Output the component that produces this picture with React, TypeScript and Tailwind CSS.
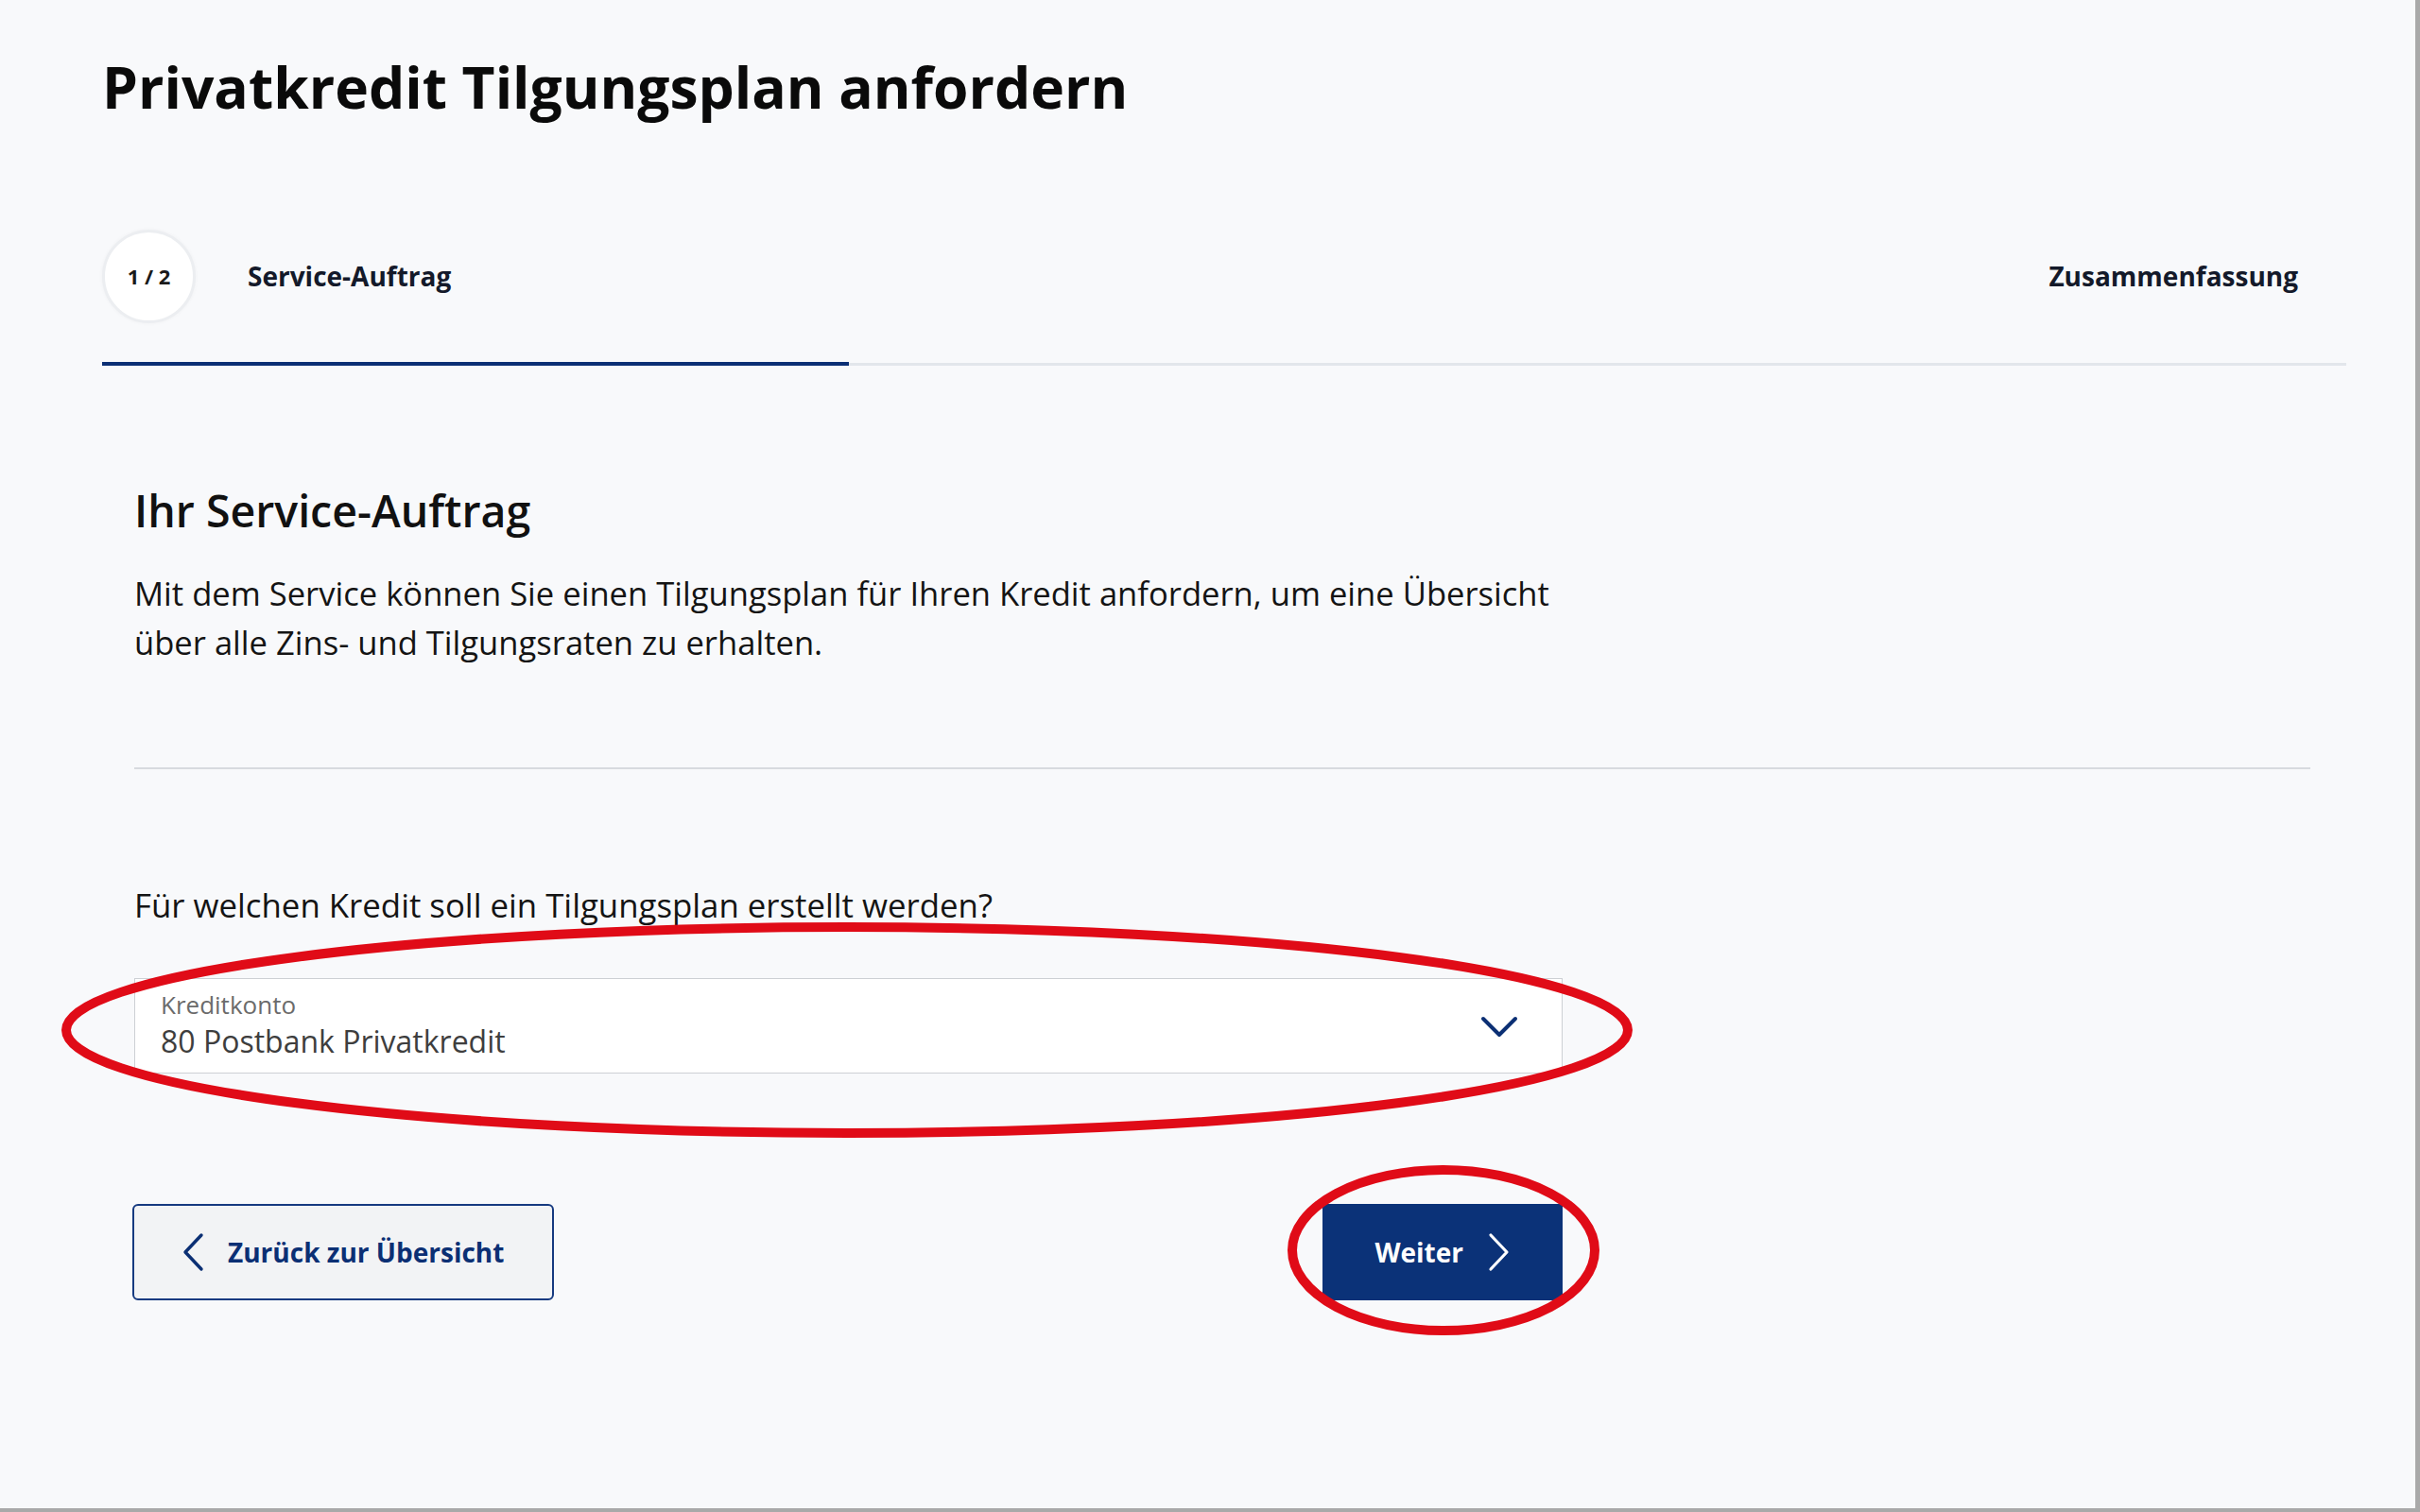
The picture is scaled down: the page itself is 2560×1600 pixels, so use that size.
import * as React from "react";

const ChevronLeft = ({ className }: { className?: string }) => (
  <svg viewBox="0 0 24 42" className={className} fill="none" stroke="currentColor" strokeWidth={3.4} strokeLinecap="round" strokeLinejoin="round">
    <path d="M21 3 L4 21 L21 39" />
  </svg>
);

const ChevronRight = ({ className }: { className?: string }) => (
  <svg viewBox="0 0 24 42" className={className} fill="none" stroke="currentColor" strokeWidth={3.2} strokeLinecap="round" strokeLinejoin="round">
    <path d="M3 3 L20 21 L3 39" />
  </svg>
);

const ChevronDown = ({ className }: { className?: string }) => (
  <svg viewBox="0 0 40 24" className={className} fill="none" stroke="currentColor" strokeWidth={4} strokeLinecap="round" strokeLinejoin="round">
    <path d="M3 3 L20 20 L37 3" />
  </svg>
);

const App = () => {
  return (
    <div className="relative w-[2560px] h-[1600px] overflow-hidden bg-[#f8f9fb] border-r-[5px] border-b-[4px] border-[#a9a9a9] font-['Open_Sans',sans-serif] text-[#111]">
      <div className="pl-[108px] pr-[73px] pt-[56px]">
        <h1 className="text-[60.5px] leading-[72px] font-bold text-[#0a0a0a]">
          Privatkredit Tilgungsplan anfordern
        </h1>

        {/* stepper */}
        <div className="mt-[115px] flex items-center justify-between pr-[51px]">
          <div className="flex items-center gap-[55px]">
            <div className="w-[99px] h-[99px] rounded-full bg-white border-[3px] border-[#eceef1] shadow-[0_0_4px_rgba(0,0,0,0.04)] flex items-center justify-center text-[22px] font-bold text-[#1a1a1a]">
              1 / 2
            </div>
            <span className="-mt-[2px] text-[28px] font-bold text-[#141a2a]">Service-Auftrag</span>
          </div>
          <span className="-mt-[2px] text-[28px] font-bold text-[#141a2a]">Zusammenfassung</span>
        </div>

        <div className="mt-[41px] flex items-center h-[4px]">
          <div className="w-[790px] h-[4px] bg-[#0b2f74]" />
          <div className="flex-1 h-[3px] bg-[#e2e6eb]" />
        </div>

        {/* content */}
        <div className="pl-[34px] pr-[38px]">
          <h2 className="mt-[125px] text-[46.5px] leading-[56px] font-semibold text-[#111]">
            Ihr Service-Auftrag
          </h2>
          <p className="mt-[34px] text-[34.6px] leading-[52px] text-[#141414]">
            Mit dem Service können Sie einen Tilgungsplan für Ihren Kredit anfordern, um eine Übersicht
            <br />
            über alle Zins- und Tilgungsraten zu erhalten.
          </p>

          <div className="mt-[106px] h-[2px] bg-[#d7dadf]" />

          <p className="mt-[120px] text-[34.8px] leading-[48px] text-[#141414]">
            Für welchen Kredit soll ein Tilgungsplan erstellt werden?
          </p>

          <div className="w-[1511px]">
            <div className="mt-[53px] h-[101px] bg-white border border-[#cdd0d4] pl-[27px] pr-[46px] pt-[11px] flex items-start justify-between">
              <div className="flex flex-col">
                <span className="text-[26px] leading-[32px] text-[#6b6b6b]">Kreditkonto</span>
                <span className="mt-[4px] text-[32px] leading-[38px] text-[#3e3e3e]">80 Postbank Privatkredit</span>
              </div>
              <ChevronDown className="mt-[28px] w-[40px] h-[24px] text-[#0b2f74]" />
            </div>

            <div className="mt-[138px] flex items-center justify-between">
              <button className="-ml-[2px] h-[102px] pl-[50px] pr-[51px] flex items-center gap-[25px] rounded-[6px] border-2 border-[#163a80] bg-[#f2f3f5] text-[#0b2f74] text-[28px] font-bold">
                <ChevronLeft className="w-[24px] h-[42px]" />
                Zurück zur Übersicht
              </button>
              <button className="h-[102px] pl-[55px] pr-[55px] flex items-center gap-[26px] bg-[#0b3278] text-white text-[28px] font-bold">
                Weiter
                <ChevronRight className="w-[24px] h-[42px]" />
              </button>
            </div>
          </div>
        </div>
      </div>

      {/* red annotation marks */}
      <svg className="absolute inset-0 pointer-events-none" width="2560" height="1600" viewBox="0 0 2560 1600" fill="none">
        <ellipse cx="896" cy="1090" rx="826" ry="109" stroke="#e00b17" strokeWidth="10" />
        <ellipse cx="1527" cy="1323" rx="160" ry="85" stroke="#e00b17" strokeWidth="10" />
      </svg>
    </div>
  );
};

export default App;
